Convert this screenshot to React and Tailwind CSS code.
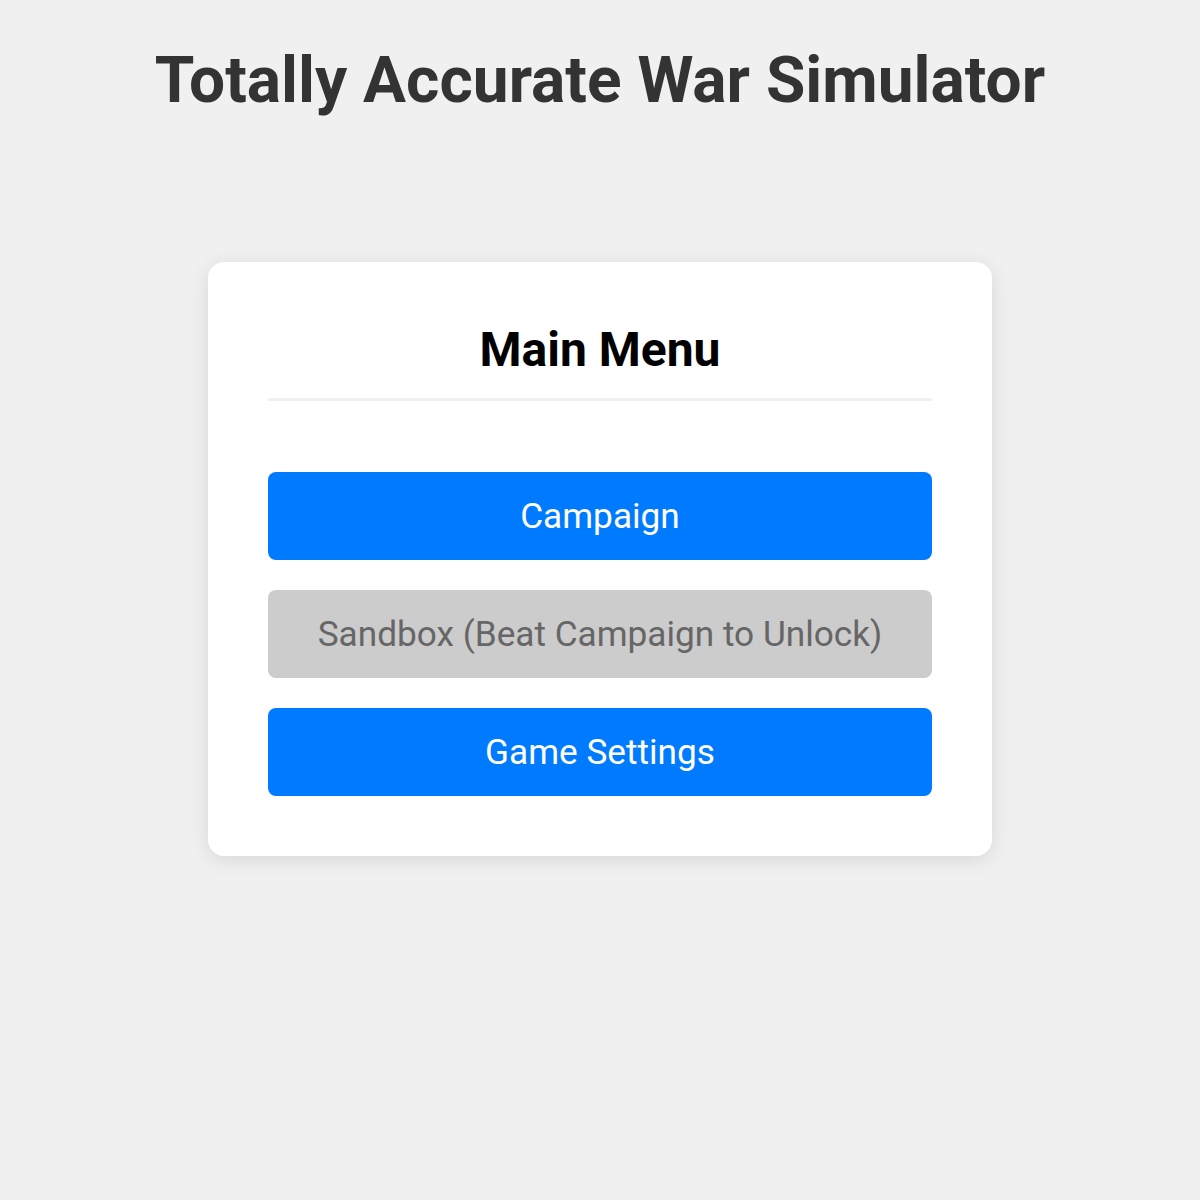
export default function App() {
  return (
    <div
      className="min-h-[1200px] bg-[#f0f0f0] flex flex-col items-center"
      style={{ fontFamily: 'Roboto, "Liberation Sans", sans-serif' }}
    >
      {/* Title */}
      <h1 className="mt-[43px] text-[64px] leading-[75px] font-bold text-[#333]">
        Totally Accurate War Simulator
      </h1>

      {/* Menu card */}
      <div className="mt-[144px] w-[784px] bg-white rounded-2xl p-[60px] shadow-[0_4px_20px_rgba(0,0,0,0.1)]">
        <h2 className="text-center text-[48px] leading-[56px] font-bold text-black pb-5 border-b-[3px] border-[#f0f0f0]">
          Main Menu
        </h2>

        <div className="mt-[71px] flex flex-col gap-[30px]">
          <button className="h-[88px] w-full rounded-lg bg-[#007bff] text-white text-[35.2px]">
            Campaign
          </button>
          <button
            disabled
            className="h-[88px] w-full rounded-lg bg-[#ccc] text-[#666] text-[35.2px] cursor-not-allowed"
          >
            Sandbox (Beat Campaign to Unlock)
          </button>
          <button className="h-[88px] w-full rounded-lg bg-[#007bff] text-white text-[35.2px]">
            Game Settings
          </button>
        </div>
      </div>
    </div>
  )
}
